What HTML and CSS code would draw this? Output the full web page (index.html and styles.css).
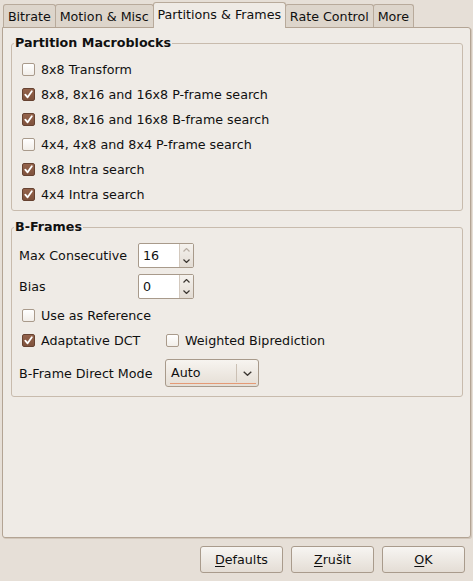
FILE: index.html
```html
<!DOCTYPE html>
<html>
<head>
<meta charset="utf-8">
<link rel="stylesheet" href="styles.css">
</head>
<body>
<div class="dialog">
  <div class="tabs">
    <div class="tab">Bitrate</div>
    <div class="tab">Motion &amp; Misc</div>
    <div class="tab active">Partitions &amp; Frames</div>
    <div class="tab">Rate Control</div>
    <div class="tab">More</div>
  </div>
  <div class="page">
    <fieldset class="frame">
      <legend>Partition Macroblocks</legend>
      <div class="checks">
        <div class="check"><span class="box"></span><span>8x8 Transform</span></div>
        <div class="check"><span class="box on"><svg width="9" height="9" viewBox="0 0 9 9"><path d="M1.3 4.6 L3.6 7.3 L7.8 1.2" fill="none" stroke="#fff" stroke-width="1.8" stroke-linecap="round" stroke-linejoin="round"/></svg></span><span>8x8, 8x16 and 16x8 P-frame search</span></div>
        <div class="check"><span class="box on"><svg width="9" height="9" viewBox="0 0 9 9"><path d="M1.3 4.6 L3.6 7.3 L7.8 1.2" fill="none" stroke="#fff" stroke-width="1.8" stroke-linecap="round" stroke-linejoin="round"/></svg></span><span>8x8, 8x16 and 16x8 B-frame search</span></div>
        <div class="check"><span class="box"></span><span>4x4, 4x8 and 8x4 P-frame search</span></div>
        <div class="check"><span class="box on"><svg width="9" height="9" viewBox="0 0 9 9"><path d="M1.3 4.6 L3.6 7.3 L7.8 1.2" fill="none" stroke="#fff" stroke-width="1.8" stroke-linecap="round" stroke-linejoin="round"/></svg></span><span>8x8 Intra search</span></div>
        <div class="check"><span class="box on"><svg width="9" height="9" viewBox="0 0 9 9"><path d="M1.3 4.6 L3.6 7.3 L7.8 1.2" fill="none" stroke="#fff" stroke-width="1.8" stroke-linecap="round" stroke-linejoin="round"/></svg></span><span>4x4 Intra search</span></div>
      </div>
    </fieldset>
    <fieldset class="frame">
      <legend>B-Frames</legend>
      <div class="bframes">
        <div class="field">
          <span class="lbl">Max Consecutive</span>
          <div class="spin">
            <span class="val">16</span>
            <span class="btns">
              <span class="arr"><svg width="7" height="4" viewBox="0 0 7 4"><path d="M0.5 3.5 L3.5 0.5 L6.5 3.5" fill="none" stroke="#b8aea4" stroke-width="1.2"/></svg></span>
              <span class="arr"><svg width="7" height="4" viewBox="0 0 7 4"><path d="M0.5 0.5 L3.5 3.5 L6.5 0.5" fill="none" stroke="#3a3530" stroke-width="1.2"/></svg></span>
            </span>
          </div>
        </div>
        <div class="field">
          <span class="lbl">Bias</span>
          <div class="spin">
            <span class="val">0</span>
            <span class="btns">
              <span class="arr"><svg width="7" height="4" viewBox="0 0 7 4"><path d="M0.5 3.5 L3.5 0.5 L6.5 3.5" fill="none" stroke="#3a3530" stroke-width="1.2"/></svg></span>
              <span class="arr"><svg width="7" height="4" viewBox="0 0 7 4"><path d="M0.5 0.5 L3.5 3.5 L6.5 0.5" fill="none" stroke="#3a3530" stroke-width="1.2"/></svg></span>
            </span>
          </div>
        </div>
        <div class="crow first">
          <div class="check"><span class="box"></span><span>Use as Reference</span></div>
        </div>
        <div class="crow">
          <div class="check wide"><span class="box on"><svg width="9" height="9" viewBox="0 0 9 9"><path d="M1.3 4.6 L3.6 7.3 L7.8 1.2" fill="none" stroke="#fff" stroke-width="1.8" stroke-linecap="round" stroke-linejoin="round"/></svg></span><span>Adaptative DCT</span></div>
          <div class="check"><span class="box"></span><span>Weighted Biprediction</span></div>
        </div>
        <div class="field combo-row">
          <span class="lbl wide">B-Frame Direct Mode</span>
          <div class="combo">
            <span class="ctext">Auto</span>
            <span class="carrow"><svg width="9" height="5" viewBox="0 0 9 5"><path d="M0.7 0.7 L4.5 4.3 L8.3 0.7" fill="none" stroke="#3a3530" stroke-width="1.3"/></svg></span>
          </div>
        </div>
      </div>
    </fieldset>
  </div>
  <div class="actions">
    <div class="btn"><span><u>D</u>efaults</span></div>
    <div class="btn"><span><u>Z</u>rušit</span></div>
    <div class="btn"><span><u>O</u>K</span></div>
  </div>
</div>
</body>
</html>
```
FILE: styles.css
```css
* { box-sizing: border-box; }
html, body { margin: 0; padding: 0; }
body {
  width: 473px;
  height: 581px;
  background: #e6dfd7;
  font-family: "DejaVu Sans", sans-serif;
  font-size: 12.7px;
  color: #101010;
  overflow: hidden;
}
.dialog {
  display: flex;
  flex-direction: column;
  height: 581px;
  padding: 2px 2px 0 2px;
}
.tabs {
  display: flex;
  align-items: flex-end;
  height: 25px;
  padding-left: 1px;
}
.tab {
  height: 23px;
  padding: 1px 3.9px 0 3.9px;
  display: flex;
  align-items: center;
  border: 1px solid #b8aa9b;
  border-bottom: none;
  border-radius: 3px 3px 0 0;
  background: #ddd5cb;
  margin-right: -1px;
  white-space: nowrap;
}
.tab.active {
  height: 26px;
  margin-bottom: -1px;
  padding: 0 3.9px 3px 3.9px;
  background: #efebe6;
  position: relative;
  z-index: 1;
}
.page {
  height: 511px;
  flex: none;
  border: 1px solid #b3a494;
  border-radius: 0 3px 3px 3px;
  background: #efebe6;
  padding: 7px 7px 0 8px;
  display: flex;
  flex-direction: column;
  gap: 8px;
  box-shadow: 1px 1px 0 #d2c7bb;
}
.frame {
  margin: 0;
  padding: 0;
  border: 1px solid #c8bbad;
  border-radius: 3px;
  min-width: 0;
}
.frame legend {
  margin-left: 2px;
  padding: 0 1px;
  font-weight: bold;
  line-height: 16px;
}
.checks {
  padding: 6px 0 3px 10px;
  display: flex;
  flex-direction: column;
}
.check {
  height: 25px;
  display: flex;
  align-items: center;
  gap: 6px;
  white-space: nowrap;
}
.box {
  width: 13px;
  height: 13px;
  flex: none;
  border: 1px solid #a99a8b;
  border-radius: 2px;
  background: linear-gradient(#ffffff, #f2eee9);
  display: flex;
  align-items: center;
  justify-content: center;
}
.box.on {
  background: linear-gradient(#94634b, #7f523d);
  border-color: #664231;
}
.box svg { display: block; }
.bframes {
  padding: 8px 0 9px 7px;
  display: flex;
  flex-direction: column;
}
.field {
  display: flex;
  align-items: center;
  height: 25px;
}
.field + .field { margin-top: 6px; }
.lbl { width: 119px; flex: none; }
.lbl.wide { width: 146px; }
.spin {
  display: flex;
  width: 56px;
  height: 25px;
  border: 1px solid #a89a8b;
  border-radius: 2px;
  background: #fff;
}
.spin .val {
  flex: 1;
  padding-left: 4px;
  display: flex;
  align-items: center;
}
.spin .btns {
  width: 14px;
  flex: none;
  border-left: 1px solid #d3c9be;
  background: linear-gradient(#f5f2ee, #e3dcd4);
  display: flex;
  flex-direction: column;
}
.spin .arr {
  flex: 1;
  display: flex;
  align-items: center;
  justify-content: center;
}
.spin .arr svg { display: block; }
.crow {
  display: flex;
  height: 25px;
  padding-left: 3px;
}
.crow.first { margin-top: 4px; }
.crow .check { height: 25px; }
.check.wide { width: 144px; }
.combo-row { height: 28px; margin-top: 6px; }
.combo {
  width: 94px;
  height: 28px;
  border: 1px solid #a89a8b;
  border-radius: 3px;
  background: linear-gradient(#f7f4f0, #e5ded5);
  display: flex;
  align-items: center;
  position: relative;
}
.combo::after {
  content: "";
  position: absolute;
  left: 4px;
  right: 2px;
  bottom: 2px;
  height: 1px;
  background: #e59a75;
}
.ctext {
  flex: 1;
  padding-left: 5px;
  height: 18px;
  line-height: 18px;
  border-right: 1px solid #cbc0b4;
}
.carrow {
  width: 21px;
  display: flex;
  justify-content: center;
  align-items: center;
}
.carrow svg { display: block; }
.actions {
  display: flex;
  justify-content: flex-end;
  gap: 8px;
  padding: 8px 6px 0 0;
}
.btn {
  width: 83px;
  height: 27px;
  border: 1px solid #a99b8c;
  border-radius: 3px;
  background: linear-gradient(#f7f5f2, #e4ddd5);
  display: flex;
  align-items: center;
  justify-content: center;
}
.btn u { text-underline-offset: 2px; }
```
